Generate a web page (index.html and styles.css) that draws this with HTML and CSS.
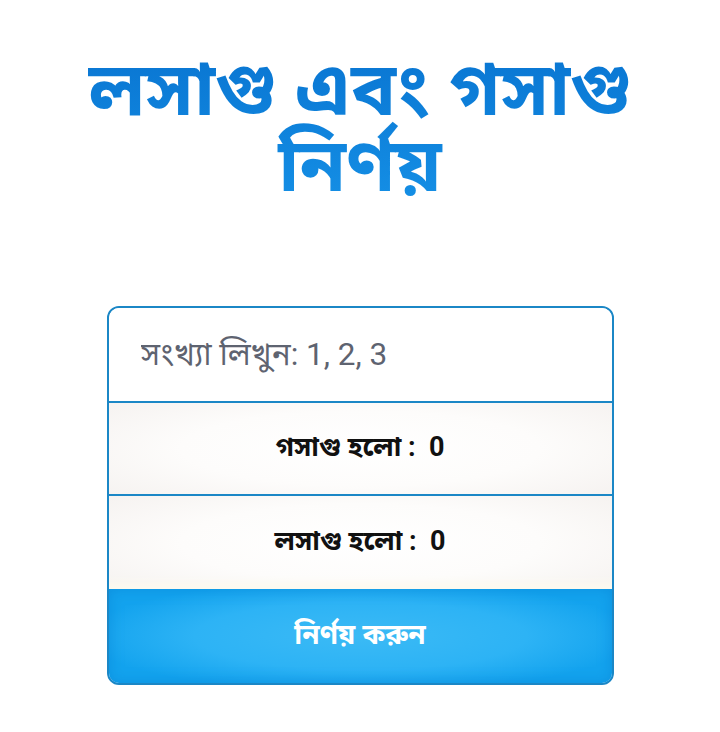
FILE: index.html
```html
<!DOCTYPE html>
<html lang="bn">
<head>
<meta charset="utf-8">
<title>লসাগু এবং গসাগু নির্ণয়</title>
<link rel="stylesheet" href="styles.css">
</head>
<body>
<main class="page">
  <h1 class="title">লসাগু এবং গসাগু নির্ণয়</h1>
  <section class="card">
    <input class="field" type="text" placeholder="সংখ্যা লিখুন: 1, 2, 3">
    <div class="row"><span class="row-text">গসাগু হলো :&nbsp; 0</span></div>
    <div class="row row-last"><span class="row-text">লসাগু হলো :&nbsp; 0</span></div>
    <button class="btn" type="button">নির্ণয় করুন</button>
  </section>
</main>
</body>
</html>
```
FILE: styles.css
```css
* { box-sizing: border-box; }
html, body { margin: 0; padding: 0; background: #ffffff; }
body {
  font-family: Roboto, "Noto Sans Bengali", "Noto Sans", sans-serif;
  width: 720px;
  height: 732px;
  overflow: hidden;
}
.page {
  display: flex;
  flex-direction: column;
  align-items: center;
  padding-top: 58px;
}
.title {
  margin: 0;
  width: 660px;
  text-align: center;
  font-family: "Noto Sans Bengali", "Noto Sans", sans-serif;
  font-size: 75px;
  line-height: 76px;
  font-weight: 700;
  color: #0b80da;
  background: linear-gradient(180deg, #0a77d3 0%, #1590e6 100%);
  -webkit-background-clip: text;
  background-clip: text;
  -webkit-text-fill-color: transparent;
}
.card {
  margin-top: 96px;
  width: 507px;
  border: 2px solid #1b87c6;
  border-radius: 12px;
  overflow: hidden;
  display: flex;
  flex-direction: column;
  background: #fff;
}
.field {
  height: 95px;
  border: none;
  outline: none;
  padding: 0 0 0 32px;
  font-family: Roboto, "Noto Sans Bengali", sans-serif;
  font-size: 31.5px;
  color: #333;
  background: #fff;
  border-bottom: 2px solid #1b87c6;
}
.field::placeholder { color: #5e6370; }
.row {
  height: 93px;
  display: flex;
  align-items: center;
  justify-content: center;
  background: radial-gradient(ellipse 65% 75% at 50% 50%, #ffffff 0%, #fdfcfb 55%, #f6f3f1 100%);
  border-bottom: 2px solid #1b87c6;
}
.row-last {
  border-bottom: none;
  box-shadow: inset 0 -12px 8px -6px #fdfaee;
}
.row-text {
  font-family: Roboto, "Noto Sans Bengali", sans-serif;
  font-size: 27px;
  font-weight: 700;
  color: #111;
  white-space: pre;
}
.btn {
  height: 94px;
  border: none;
  margin: 0;
  font-family: "Noto Sans Bengali", Roboto, sans-serif;
  font-size: 28px;
  font-weight: 700;
  color: #ffffff;
  background: radial-gradient(ellipse 55% 60% at 50% 50%, #3bbaf5 0%, #2db3f5 60%, #13a3ee 100%);
  box-shadow: inset 0 0 14px rgba(8, 130, 210, 0.55);
  cursor: pointer;
}
```
